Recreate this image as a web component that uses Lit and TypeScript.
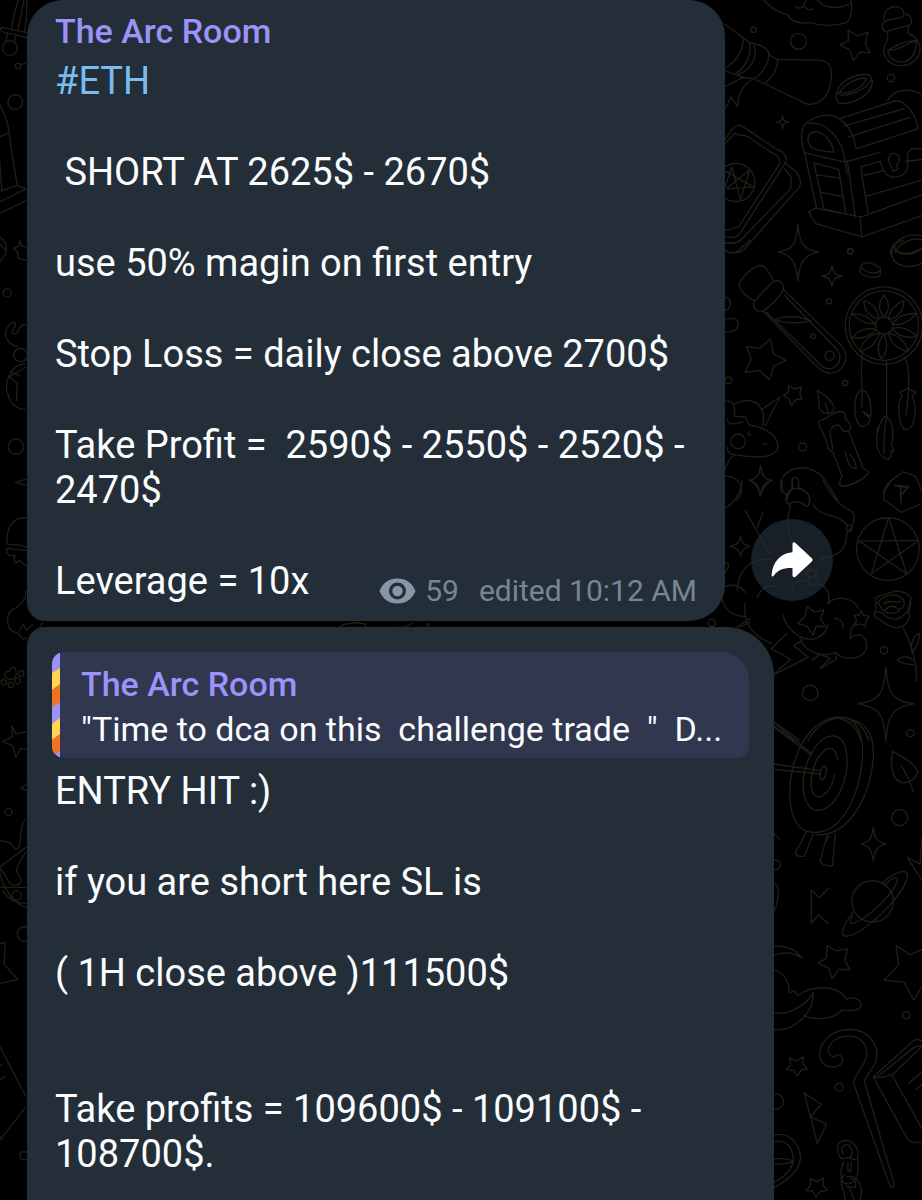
import { LitElement, html, css, svg } from "lit";
import { customElement, property } from "lit/decorators.js";

interface Tile {
  x: number;
  y: number;
  paths: string[];
  circles: [number, number, number][];
}

// Doodles are drawn at three times their size, one tile per region of the wallpaper.
const TILES: Tile[] = [
  {
    x: 700,
    y: 0,
    circles: [[161, 89, 8], [296, 124, 24], [573, 234, 11], [451, 753, 8], [108, 547, 57]],
    paths: [
      // sleeping cloud
      "M192 0C210 22 232 38 262 44C275 66 300 72 328 68C365 78 408 78 440 68C456 50 458 22 452 0M288 18C292 28 306 26 312 16L318 0M312 16C316 28 328 32 340 26M352 0C372 24 410 30 450 12",
      // star, potion
      "M444 90L472 108L504 96L496 130L510 158L480 156L460 182L450 150L420 134L446 122Z",
      "M552 60C550 30 570 18 590 20C606 24 614 34 612 46C600 60 575 52 552 66C542 72 546 92 560 96C580 84 610 84 630 74C640 66 634 44 618 42M560 96C568 110 562 120 556 134C544 158 556 186 590 196C624 200 656 184 660 152C662 124 642 108 624 98L626 78M564 150C590 156 620 130 648 122C650 150 640 182 606 186C582 186 564 172 564 150ZC590 136 620 120 648 122",
      // scroll
      "M74 72L150 128C170 134 196 134 208 160C212 172 222 172 234 178L360 180C396 184 398 216 392 250C384 290 360 316 322 312L166 238M130 118C130 150 110 186 76 204M150 130C156 160 140 200 108 220M162 138C178 172 146 214 116 222M206 160C210 190 180 230 160 236M234 178C232 210 214 236 194 250M76 212L130 232L160 236C140 250 118 262 112 320L94 290L78 324M78 258L130 232",
      // coin
      "M412 276C420 240 470 220 504 224C520 234 520 250 510 268C490 300 440 316 416 308C408 298 406 288 412 276C430 300 500 270 516 236M420 276C436 248 480 230 500 236C490 260 450 286 420 276Z",
      // sparkles
      "M248 346C250 362 252 364 266 366C252 368 250 370 248 386C246 370 244 368 230 366C244 364 246 362 248 346Z",
      "M294 670C298 730 310 748 356 756C310 764 298 790 294 842C290 790 278 764 234 756C280 748 290 730 294 670Z",
      // tarot cards
      "M76 416L100 384C110 372 122 374 136 384L232 448C262 460 262 478 254 492L120 700C108 714 92 714 76 708M76 430L104 400C118 408 130 402 144 410L222 462C236 464 238 476 240 490L116 680C100 680 96 692 76 690M256 490L290 516C306 540 304 560 288 572L136 744C122 760 96 762 76 752M254 506L274 530C270 550 276 560 270 568L116 726C104 726 90 732 76 728",
      "M76 512L160 560L80 566L150 508L122 600L96 500L76 560",
      // treasure chest
      "M314 458C300 420 300 380 326 364C350 346 390 340 412 352C450 372 466 420 468 446M314 458L436 486M328 370C380 362 430 420 436 486M324 420C324 400 340 392 356 396C384 404 400 440 402 456C376 456 340 448 332 440ZM418 356L586 302C620 300 650 350 654 386L468 446M562 302C580 268 630 260 666 284M430 378L612 326M446 410L630 352M436 486L542 456M442 480L466 650M436 486L442 520M314 458L350 624M342 488L416 508L438 642L372 626ZM350 524L422 534M362 576L430 590M326 636L346 624L484 650L666 584M326 636L348 670L486 710L666 646M480 650L486 710M482 500L542 484C548 518 566 534 590 530C622 526 628 500 622 462M482 500L504 636M492 526L548 512M500 588L666 540M622 462L634 446L666 446M616 484L666 478M574 500C558 478 568 458 584 460C602 464 602 484 590 494L594 508L580 514Z",
      "M576 770C560 740 600 708 640 704L666 706M584 756C600 724 640 712 666 718M590 752C620 768 650 756 666 742",
    ],
  },
  {
    x: 700,
    y: 240,
    circles: [[451, 33, 8], [387, 183, 8], [340, 288, 7], [389, 346, 14], [86, 420, 10], [436, 428, 8], [308, 620, 12], [115, 603, 22], [552, 256, 104], [552, 256, 116], [552, 256, 26]],
    paths: [
      "M76 30C94 46 116 36 126 22L150 0M76 8L104 10L120 0",
      "M576 50C570 20 590 6 610 0M576 50C590 84 640 84 666 68M584 20C584 46 630 50 666 26",
      "M396 76C400 100 406 104 426 108C406 112 400 116 396 138C392 116 386 112 366 108C386 104 392 100 396 76Z",
      "M482 80C486 64 516 62 542 84L540 108C520 116 484 108 480 94ZC500 100 530 104 542 90",
      // test tube
      "M118 138C112 126 160 72 186 76C196 78 216 108 222 124C240 116 254 130 250 148L424 316C456 352 426 404 384 398C370 396 356 384 340 368L190 212C166 216 156 200 164 182C146 172 124 156 118 138ZM164 182C176 170 196 146 222 124M190 212C210 200 240 170 250 148M200 216L366 378C400 404 440 360 408 324L254 166M228 238C250 226 300 226 332 242C300 250 250 250 228 238Z",
      "M76 170C96 176 98 200 76 212M76 236C110 230 118 240 114 258C110 272 90 278 76 274",
      // stars
      "M212 296L220 340L258 360L222 378L208 418L178 390L136 396L154 356L140 318L180 324Z",
      "M266 436L284 446L304 440L300 460L306 476L288 478L274 496L268 476L250 466L266 456Z",
      // dream catcher
      "M552 164C534 190 534 208 552 230C570 208 570 190 552 164ZM492 182C492 210 510 230 536 236C534 210 520 190 492 182ZM456 220C474 240 500 250 526 252C510 230 486 220 456 220ZM456 292C480 296 510 290 528 268C504 260 476 268 456 292ZM480 334C506 326 530 310 538 280C510 282 488 302 480 334ZM544 356C530 330 534 304 550 282C566 306 564 330 544 356ZM612 182C584 192 568 210 566 238C594 232 610 212 612 182ZM648 220C620 218 592 228 578 252C602 256 628 246 648 220ZM650 288C632 268 604 258 578 264C592 286 620 296 650 288ZM624 334C616 302 592 282 566 280C574 310 596 328 624 334Z",
      "M488 344C478 380 490 430 486 500M560 364V530C554 560 550 590 552 640M616 350C634 400 626 470 618 524M486 450C460 450 456 540 482 556C500 566 512 540 508 532L488 514L512 528C516 480 504 450 486 450ZM600 456L622 444L648 456L636 468C654 500 644 566 620 568C594 566 590 490 606 466ZM556 526C526 560 520 630 550 650C566 664 576 650 574 630L582 632L574 612C584 570 580 546 556 526ZM530 570L546 540",
      // candle
      "M352 450C360 470 352 490 360 506C372 524 400 524 402 502C398 484 376 464 352 450ZM376 488L386 520M396 634L384 624C380 594 368 576 358 556C350 534 370 544 390 526C410 512 424 508 436 520C430 540 448 540 452 556C454 576 430 580 424 562C414 546 398 556 390 572L398 626M398 634L426 706C418 722 416 736 428 738C450 738 500 712 506 696C504 686 492 692 488 680L446 572M436 632C440 660 452 690 468 684C470 664 456 650 450 640",
      // unicorn
      "M76 484C100 476 108 500 104 528M104 528L136 530L148 554C210 562 240 596 232 626C218 660 150 652 90 640C84 632 80 630 82 620M104 492C140 470 180 480 190 520C194 540 190 550 188 556M188 506L240 470L196 556M82 536C84 556 110 552 128 544M76 686C84 664 94 650 104 644M148 574C140 580 148 590 152 584M188 610L204 612",
      "M182 674C186 708 194 714 216 720C194 726 186 736 182 766C178 736 170 726 148 720C170 714 178 708 182 674Z",
      "M76 708C120 706 140 750 110 778M246 756C232 716 260 682 306 682C370 684 386 740 414 780M276 744V720C278 708 294 708 296 720V742M262 780C262 752 280 740 300 744C324 754 330 764 328 780M550 756C556 726 590 710 610 694L646 708C656 724 660 740 666 756M586 736L624 742L600 764M600 736L604 780",
    ],
  },
  {
    x: 700,
    y: 480,
    circles: [[36, 427, 11], [448, 143, 9], [564, 206, 94], [552, 509, 11], [331, 637, 23], [631, 758, 11]],
    paths: [
      "M126 0C124 40 100 70 76 84M154 0C170 12 178 26 182 48C186 26 196 12 214 0",
      // genie lamp
      "M246 0C244 24 252 40 262 46C250 60 264 70 272 76C262 110 260 150 276 184M262 46C262 28 282 20 306 28C320 36 332 44 330 60C324 70 330 80 316 76C300 60 280 62 268 70M278 24V0M296 24V0M370 0C390 40 420 76 450 90C470 100 462 120 456 140C448 154 440 150 440 162C440 200 420 230 360 234M340 74C360 110 420 100 442 136M416 12C440 24 456 10 480 0",
      "M136 90L208 216M190 94L172 142",
      "M122 168C126 188 132 192 150 198C132 204 126 208 122 228C118 208 112 204 92 198C112 192 118 188 122 168Z",
      // pentagram
      "M566 112L620 280L478 182L656 180L514 280Z",
      // rune
      "M550 56C552 30 566 10 574 0M550 56L604 96L660 72M584 14L626 18L602 48M602 14L604 68",
      // storm cloud
      "M112 330C116 256 160 234 216 236M76 248L86 250C86 264 82 270 76 276M76 318C96 308 124 316 136 336M66 348C70 388 98 408 138 408M136 368C124 440 180 476 214 488M172 352C182 324 202 314 222 316M276 328C280 302 316 286 336 314C364 300 396 330 384 370M384 370C406 344 460 350 476 384M250 404C256 440 296 478 336 476C360 474 380 456 384 430M300 474C318 520 370 530 408 516M408 516C430 544 504 540 500 490C494 454 462 460 452 474C450 446 456 440 470 424M404 414C420 412 430 424 430 444M110 440L150 414M120 440L150 424",
      "M262 458L214 504L272 536L222 582L326 530L282 496L308 478M336 540L360 520M360 564L410 536L406 526M360 520L390 534L360 564",
      "M322 378L344 394L372 388L362 414L376 438L348 438L340 464L322 438L292 428L314 410Z",
      "M484 390L490 404L508 408L498 420L496 438L482 430L466 434L470 418L462 404L478 404Z",
      "M330 262L338 270L352 270L346 282L350 292L336 290L326 296L324 284L316 276L328 274Z",
      // rose
      "M524 398C534 376 522 362 530 350C550 340 570 340 582 332C600 330 624 338 632 352C636 376 622 388 628 402C630 426 610 440 588 442C556 436 534 410 524 408ZC540 384 550 404 566 412C590 420 600 414 610 404C630 396 626 376 630 360M534 366C550 340 590 340 600 350C620 360 614 380 600 386C590 402 560 404 546 386ZM552 372C566 352 590 372 602 362M556 388C580 366 590 384 598 388M610 442C636 490 650 550 650 602M636 516C630 490 640 466 658 458C658 484 652 500 636 516M640 552C620 552 604 550 592 538C608 524 630 528 638 540",
      "M558 558C562 640 580 662 642 670C580 680 562 700 558 784C554 700 536 680 474 670C536 662 554 640 558 558Z",
      "M324 780C350 730 400 706 440 712C480 722 500 756 506 780M410 710C450 722 474 740 482 780M222 724L300 780M222 736L282 780",
    ],
  },
  {
    x: 700,
    y: 700,
    circles: [[599, 351, 24], [226, 492, 15], [518, 602, 62]],
    paths: [
      // dart board
      "M420 50C330 50 274 160 270 270C268 360 300 404 360 394C440 380 484 260 488 160C490 90 464 48 420 50ZM450 58C500 60 524 110 520 170C510 300 440 410 346 402M402 106C350 104 310 190 310 250C310 310 336 340 370 326C420 306 448 220 440 160C436 126 424 108 402 106ZM412 178C412 150 394 134 374 150C344 170 330 230 334 262C344 310 390 290 404 222M374 196C362 196 354 234 366 238C376 234 386 200 374 196ZM222 66L336 160M222 80L330 160M222 190L362 210M222 206L362 220M320 394L286 456C290 468 304 468 314 466L340 400M382 402L360 482C366 494 390 498 398 494L406 400M380 420L388 406",
      "M578 152C570 190 576 240 606 246C630 250 654 228 652 210C640 184 604 168 578 152ZM604 194L626 234L640 274",
      "M520 380C526 420 532 424 558 430C532 436 526 446 520 480C514 446 508 436 484 430C508 424 514 420 520 380Z",
      // saturn
      "M548 546C580 516 622 500 622 524C620 570 530 664 470 696C430 716 420 704 432 680C440 656 450 648 460 634M556 552C574 534 592 522 592 540C580 580 510 646 468 664C446 674 446 664 460 644",
      "M386 562L358 592L334 568V668L356 642L384 668M666 410L660 490L622 470L666 540M222 398L240 416M222 548C240 550 238 600 222 634",
    ],
  },
  {
    x: 700,
    y: 940,
    circles: [[619, 223, 11], [418, 439, 12], [228, 482, 23]],
    paths: [
      "M382 14L408 30L444 24L434 58L450 86L416 86L396 114L386 82L354 66L380 52Z",
      "M588 14L630 42L666 26M588 14L596 72L552 118L612 124L642 178L666 136",
      // moon behind a cloud
      "M222 16C260 14 290 28 306 52C280 32 250 34 222 44M222 88C250 92 268 120 268 156L282 150L294 164C330 136 410 126 440 176C460 164 484 178 484 192C480 212 450 210 426 208C400 236 350 240 312 224M222 216C270 224 320 190 340 156C342 220 280 272 222 266",
      // staff
      "M404 346C424 334 432 352 426 366C410 386 370 382 360 352C352 310 390 266 450 266C510 266 540 318 528 360C518 390 498 400 494 424L582 728C582 744 574 742 568 730L462 430C454 410 494 380 500 346C504 310 480 284 444 286C400 286 378 320 388 338C394 348 400 350 404 346Z",
      // spell book
      "M520 408L638 302C650 292 660 296 666 302M520 408C540 416 556 404 576 402L666 316M534 406L644 318L666 314M520 408L620 590C632 608 650 606 666 604M576 402L666 564M626 428L666 392M648 446L666 430",
      "M270 352L290 360L310 348L308 368L322 384L304 388L292 406L282 388L260 386L272 372Z",
      "M312 456L364 490L332 528L380 550L352 608L332 528Z",
      "M222 582C270 572 300 610 302 650C300 690 260 720 222 740M222 602C260 594 280 620 280 658C276 690 250 710 222 724M222 654Q260 650 282 662Q250 672 222 668",
      "M332 712L350 722L370 712L370 734L382 748L360 752L348 768L338 750L318 748L332 734Z",
      // chain
      "M424 654C408 630 408 600 436 598C466 600 480 630 472 656C462 660 446 646 440 650ZM430 640C420 620 430 610 444 612C458 620 460 640 450 650M432 662C420 690 420 710 430 724C450 736 470 720 474 690V656M444 666V690H454V664M432 700C420 720 424 740 432 752M440 708C470 698 486 730 484 760L480 780M440 736L466 740C470 720 462 712 450 712M432 752L436 780M448 740L464 780",
    ],
  },
  {
    x: 0,
    y: 0,
    circles: [[32, 144, 22], [56, 198, 8], [48, 306, 22], [24, 878, 12], [64, 1064, 20]],
    paths: [
      "M58 0C46 30 40 60 38 90M74 0L56 92M82 0C84 30 82 60 76 96M8 82L82 98M8 82C0 86 4 92 12 96L82 112M24 102L20 126M48 110L46 128M64 196L80 188",
      "M0 310C20 350 32 380 32 420L54 556M0 410L30 398M0 470L8 570M0 574L54 556L80 566L0 606M0 640L80 602M0 710C20 720 30 750 14 770L0 784M0 728L18 750",
      "M62 720L66 736L80 740M62 720L58 738L44 744L56 758L56 774L80 780",
      "M54 1040C20 1030 10 1000 28 976C46 956 54 970 44 984C30 1000 50 1010 58 990C64 976 72 970 80 974M76 1090C40 1094 20 1130 22 1170L32 1200C40 1220 60 1226 80 1228M30 1130L80 1100M30 1130L54 1150L52 1200M38 1116L60 1126",
    ],
  },
  {
    x: 0,
    y: 400,
    circles: [[50, 139, 23]],
    paths: [
      "M48 246L80 236M48 246L80 254",
      "M80 352C40 350 20 380 24 430C40 434 60 430 80 440M22 444C20 462 32 470 48 464C40 480 50 496 60 480L80 496M24 444L80 450",
      "M80 570C80 600 60 620 40 626C20 640 20 680 40 692L60 700L70 716L82 712M60 690L72 670L82 690L100 672M120 684L130 666",
      "M22 832C10 826 18 810 30 812C34 796 50 796 50 812C56 830 36 844 22 832ZM8 850C0 840 12 834 20 840C26 850 14 858 8 850ZM28 856C22 846 36 842 42 850C48 862 32 866 28 856ZM48 846C44 836 52 830 60 834C70 844 56 856 48 846ZM58 824C56 812 66 806 72 812C78 822 66 834 58 824Z",
      "M38 976L50 1000L80 994M38 976L40 1008L10 1022L40 1036L50 1070L64 1044L80 1046M66 1164L80 1150M66 1164L80 1168",
      "M1020 680Q1050 660 1096 670L1100 680M1190 680Q1220 684 1240 666M1280 680L1286 668L1292 680",
    ],
  },
  {
    x: 0,
    y: 800,
    circles: [[28, 34, 11], [76, 400, 22], [74, 1064, 12], [52, 284, 14]],
    paths: [
      "M80 56C66 70 62 100 64 120C60 150 46 150 40 134C30 120 14 124 0 118M80 140L0 200C20 230 20 220 26 240C36 260 66 256 66 238C62 216 50 220 52 206C60 180 70 170 80 154M0 200C0 220 20 300 80 320M0 260H80M10 270C30 300 50 306 80 308",
      "M0 430L18 424L14 490L56 536L0 548M0 734L80 886M0 1020L80 918M0 1006L10 1012M0 796L8 792M0 840L16 826",
    ],
  },
];

@customElement("doodle-wallpaper")
export class DoodleWallpaper extends LitElement {
  static styles = css`
    :host {
      display: block;
    }
    .art {
      display: block;
      width: 100%;
      height: 100%;
      fill: none;
      stroke: #221e17;
      stroke-width: 4;
      stroke-linecap: round;
      stroke-linejoin: round;
    }
  `;

  render() {
    return html`
      <svg class="art" viewBox="0 0 922 1200" preserveAspectRatio="xMaxYMin slice" aria-hidden="true">
        ${TILES.map(
          (t) => svg`<g transform="translate(${t.x} ${t.y}) scale(0.33333)">
            ${t.paths.map((d) => svg`<path d=${d}></path>`)}
            ${t.circles.map(([x, y, r]) => svg`<circle cx=${x} cy=${y} r=${r}></circle>`)}
          </g>`
        )}
      </svg>
    `;
  }
}

@customElement("message-text")
export class MessageText extends LitElement {
  @property({ attribute: false }) lines: string[] = [];

  static styles = css`
    :host {
      display: flex;
      flex-direction: column;
      gap: 46px;
    }
    .line {
      margin: 0;
      font-size: 38px;
      line-height: 45px;
      white-space: pre-wrap;
    }
    .wide {
      margin-top: 45px;
    }
    .tag {
      color: #78bdf0;
      text-decoration: none;
    }
  `;

  // An empty entry stands for one more blank line before the next paragraph.
  render() {
    return this.lines.map((line, i) => {
      if (!line) return null;
      const cls = this.lines[i - 1] === "" ? "line wide" : "line";
      return html`<p class=${cls}>${line.startsWith("#") ? html`<a class="tag" href="#eth">${line}</a>` : line}</p>`;
    });
  }
}

@customElement("app-root")
export class AppRoot extends LitElement {
  static styles = css`
    :host {
      display: block;
      background: #000;
      color: #fbfcfd;
      font-family: Roboto, "Noto Sans", sans-serif;
    }
    .chat {
      position: relative;
      display: flex;
      flex-direction: column;
      gap: 6px;
      box-sizing: border-box;
      min-height: 100vh;
      padding: 0 27px;
    }
    .backdrop {
      position: absolute;
      inset: 0;
      overflow: hidden;
    }
    .row {
      position: relative;
      display: flex;
      align-items: flex-end;
      gap: 26px;
    }
    .row.last {
      flex: 1;
      align-items: stretch;
    }
    .bubble {
      box-sizing: border-box;
      min-width: 0;
      background: #232e39;
    }
    .first {
      flex: 0 1 698px;
      padding: 8px 28px 17px;
      border-radius: 36px 36px 36px 18px;
    }
    .second {
      flex: 0 1 747px;
      padding: 25px 25px 24px;
      border-radius: 18px 48px 0 0;
    }
    .name {
      margin: 0;
      color: #9c92f8;
      font-size: 34px;
      font-weight: 500;
      line-height: 46px;
    }
    .first .name {
      margin-bottom: 5px;
    }
    .body {
      display: grid;
    }
    .body > * {
      grid-area: 1 / 1;
    }
    .meta {
      display: flex;
      align-items: center;
      align-self: end;
      justify-self: end;
      color: #778696;
      font-size: 30px;
      line-height: 24px;
    }
    .eye {
      width: 37px;
      height: 26px;
      margin-right: 9px;
    }
    .views {
      margin-right: 20px;
    }
    .share {
      display: grid;
      place-items: center;
      flex: none;
      width: 82px;
      height: 82px;
      margin: 0 0 20px;
      padding: 0;
      border: 0;
      border-radius: 50%;
      background: rgba(39, 50, 63, 0.62);
      cursor: pointer;
    }
    .arrow {
      width: 42px;
      height: 36px;
    }
    .quote {
      display: flex;
      overflow: hidden;
      margin-bottom: 11px;
      border-radius: 12px 28px 12px 12px;
      background: #30374f;
    }
    .stripe {
      flex: none;
      width: 8px;
      height: 106px;
    }
    .quoted {
      flex: 1;
      min-width: 0;
      padding: 9px 20px 6px 21px;
    }
    .excerpt {
      margin: 0;
      overflow: hidden;
      font-size: 34px;
      line-height: 45px;
      text-overflow: ellipsis;
      white-space: pre;
    }
    .reply {
      padding: 0 3px;
    }
  `;

  render() {
    return html`
      <main class="chat">
        <doodle-wallpaper class="backdrop"></doodle-wallpaper>
        <div class="row">
          <article class="bubble first">
            <h2 class="name">The Arc Room</h2>
            <div class="body">
              <message-text
                .lines=${[
                  "#ETH",
                  " SHORT AT 2625$ - 2670$",
                  "use 50% magin on first entry",
                  "Stop Loss = daily close above 2700$",
                  "Take Profit =  2590$ - 2550$ - 2520$ - 2470$",
                  "Leverage = 10x",
                ]}
              ></message-text>
              <div class="meta">
                <svg class="eye" viewBox="0 0 37 26" aria-hidden="true">
                  <path
                    fill="#8796a6"
                    fill-rule="evenodd"
                    d="M18.5 0.5C10 0.5 3.500 5 0.500 13C3.500 21 10 25.500 18.500 25.500S33.500 21 36.500 13C33.500 5 27 0.500 18.500 0.500ZM18.500 4.500A8.500 8.500 0 1 1 18.500 21.500A8.500 8.500 0 1 1 18.500 4.500ZM18.500 7.800A5.200 5.200 0 1 0 18.500 18.200A5.200 5.200 0 1 0 18.500 7.800Z"
                  ></path>
                </svg>
                <span class="views">59</span>
                <span>edited 10:12 AM</span>
              </div>
            </div>
          </article>
          <button class="share" type="button" aria-label="Share">
            <svg class="arrow" viewBox="0 0 42 36" aria-hidden="true">
              <path
                fill="#fff"
                d="M21.500 2C21.500 0.400 23.300 -0.200 24.500 0.900L40.800 16.200C41.900 17.200 41.900 18.400 40.800 19.400L24.500 34.700C23.300 35.800 21.500 35.200 21.500 33.600V26C13 25.600 7 27.600 2.700 33.700C1.800 35 0.500 34.600 0.600 33C1.500 20.500 8.500 11.500 21.500 10.200Z"
              ></path>
            </svg>
          </button>
        </div>
        <div class="row last">
          <article class="bubble second">
            <div class="quote">
              <svg class="stripe" viewBox="0 0 8 106" preserveAspectRatio="none" aria-hidden="true">
                <rect width="8" height="106" fill="#9c92f8"></rect>
                <path fill="#ffd651" d="M0 21L8 16V32L0 38ZM0 72L8 66V82L0 88Z"></path>
                <path fill="#f0731f" d="M0 38L8 32V50L0 55ZM0 88L8 82V99L0 104Z"></path>
              </svg>
              <div class="quoted">
                <h2 class="name">The Arc Room</h2>
                <p class="excerpt">"Time to dca on this  challenge trade  "  D...</p>
              </div>
            </div>
            <message-text
              class="reply"
              .lines=${[
                "ENTRY HIT :)",
                "if you are short here SL is",
                "( 1H close above )111500$",
                "",
                "Take profits = 109600$ - 109100$ - 108700$.",
              ]}
            ></message-text>
          </article>
        </div>
      </main>
    `;
  }
}
